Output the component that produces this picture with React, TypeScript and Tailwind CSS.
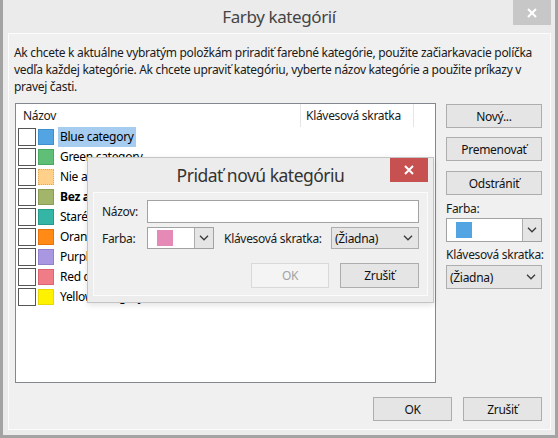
import React from 'react';

// Outlook-style "Farby kategórií" dialog with the "Pridať novú kategóriu" child dialog on top

interface Category {
  name: string;
  color: string;
  border: string;
  bold?: boolean;
  dotted?: boolean;
  selected?: boolean;
}

const CATEGORIES: Category[] = [
  { name: 'Blue category', color: '#52a5e2', border: '#3f8fcf', selected: true },
  { name: 'Green category', color: '#5fbf76', border: '#4aa862' },
  { name: 'Nie aktuálne', color: '#ffd08a', border: '#e0ab5a', dotted: true },
  { name: 'Bez akcie', color: '#a3b46b', border: '#8b9c55', bold: true },
  { name: 'Staré', color: '#34b5a6', border: '#239c8e' },
  { name: 'Orange category', color: '#ff8a16', border: '#e6740a' },
  { name: 'Purple category', color: '#a997e1', border: '#9280cc' },
  { name: 'Red category', color: '#ef7c87', border: '#d9656f' },
  { name: 'Yellow category', color: '#fff200', border: '#e6d800' },
];

function Chevron() {
  return (
    <svg width="10" height="6" viewBox="0 0 10 6">
      <path d="M1 0.8l4 4 4-4" fill="none" stroke="#3a3a3a" strokeWidth="1.3" />
    </svg>
  );
}

function CloseX() {
  return (
    <svg width="10" height="10" viewBox="0 0 10 10">
      <path d="M1 1l8 8M9 1l-8 8" stroke="#fff" strokeWidth="2" />
    </svg>
  );
}

function Btn({
  children,
  className = '',
  disabled = false,
}: {
  children: React.ReactNode;
  className?: string;
  disabled?: boolean;
}) {
  return (
    <div
      className={
        'flex items-center justify-center border ' +
        (disabled
          ? 'bg-[#f4f4f4] border-[#d9d9d9] text-[#a3a3a3] '
          : 'bg-[#e5e5e5] border-[#adadad] text-[#111] ') +
        className
      }
    >
      {children}
    </div>
  );
}

function ColorCombo({ color, className = '' }: { color: string; className?: string }) {
  return (
    <div className={'flex bg-white border border-[#a2a2a2] ' + className}>
      <div className="flex-1 flex items-center pl-[9px]">
        <div className="w-[16px] h-[16px]" style={{ backgroundColor: color }} />
      </div>
      <div className="w-[19px] flex items-center justify-center bg-[#e5e5e5] border-l border-[#adadad]">
        <Chevron />
      </div>
    </div>
  );
}

function NoneSelect({ className = '' }: { className?: string }) {
  return (
    <div
      className={
        'flex items-center justify-between bg-[#e5e5e5] border border-[#adadad] pl-[3px] pr-[5px] text-[#111] ' +
        className
      }
    >
      <span>(Žiadna)</span>
      <Chevron />
    </div>
  );
}

function CategoryRow({ cat }: { cat: Category }) {
  return (
    <div className="h-[20px] flex items-center pl-[2px] whitespace-nowrap">
      <div className="w-[18px] h-[18px] border border-[#555] bg-white" />
      <div
        className={
          'w-[16px] h-[16px] ml-[2px] border ' + (cat.dotted ? 'border-dotted' : 'border-solid')
        }
        style={{ backgroundColor: cat.color, borderColor: cat.border }}
      />
      <span
        className={
          'ml-[4px] h-[20px] leading-[20px] px-[2px] ' +
          (cat.selected ? 'bg-[#a6ccf0] ' : '') +
          (cat.bold ? 'font-bold' : '')
        }
      >
        {cat.name}
      </span>
    </div>
  );
}

function AddCategoryDialog() {
  return (
    <div className="absolute left-[84px] top-[157px] w-[347px] h-[146px] bg-[#ececec] border border-[#c4c4c4] shadow-[0_2px_6px_rgba(0,0,0,0.12)] flex flex-col">
      <div className="h-[34px] relative flex justify-center">
        <span className="text-[17.5px] leading-[34px] text-[#333] tracking-[-0.5px]">
          Pridať novú kategóriu
        </span>
        <div className="absolute right-[5px] top-0 w-[38px] h-[24px] bg-[#c75050] flex items-center justify-center">
          <CloseX />
        </div>
      </div>
      <div className="flex-1 mx-[5px] mb-[6px] bg-[#f0f0f0] border border-[#fbfbfb] pt-[7px] pb-[7px] pl-[8px] pr-[8px] flex flex-col">
        <div className="h-[23px] flex items-center">
          <span className="w-[45px]">Názov:</span>
          <div className="flex-1 h-[23px] bg-white border border-[#a2a2a2]" />
        </div>
        <div className="h-[22px] mt-[4px] flex items-center">
          <span className="w-[45px]">Farba:</span>
          <ColorCombo color="#e58ab7" className="w-[67px] h-[22px]" />
          <span className="ml-[10px] flex-1 whitespace-nowrap">Klávesová skratka:</span>
          <NoneSelect className="w-[88px] h-[22px]" />
        </div>
        <div className="mt-[14px] flex justify-end gap-[11px]">
          <Btn disabled className="w-[78px] h-[25px]">
            OK
          </Btn>
          <Btn className="w-[79px] h-[25px]">Zrušiť</Btn>
        </div>
      </div>
    </div>
  );
}

export default function App() {
  return (
    <div className="relative w-[558px] h-[438px] bg-[#ebebeb] border-x-[3px] border-b-[3px] border-[#a3a3a3] flex flex-col font-['Noto_Sans',sans-serif] text-[12px] leading-[17px] tracking-[-0.3px] text-[#1a1a1a] overflow-hidden">
      {/* Title bar */}
      <div className="h-[33px] grid grid-cols-[1fr_auto_1fr]">
        <div />
        <span className="text-[17px] leading-[33px] tracking-[-0.4px] text-[#444]">Farby kategórií</span>
        <div className="flex justify-end">
          <div className="mr-[4px] w-[38px] h-[25px] bg-[#c7c7c7] flex items-center justify-center">
            <CloseX />
          </div>
        </div>
      </div>

      {/* Main panel */}
      <div className="flex-1 ml-[5px] mr-[4px] mb-[5px] bg-[#f0f0f0] border border-[#fcfcfc] flex flex-col">
        <div className="pt-[10px] pl-[5px] whitespace-nowrap">
          <div>Ak chcete k aktuálne vybratým položkám priradiť farebné kategórie, použite začiarkavacie políčka</div>
          <div>vedľa každej kategórie. Ak chcete upraviť kategóriu, vyberte názov kategórie a použite príkazy v</div>
          <div>pravej časti.</div>
        </div>

        <div className="mt-[8px] flex pl-[6px] pr-[8px]">
          {/* Category list */}
          <div className="w-[422px] h-[280px] bg-white border border-[#828790] flex flex-col text-black">
            <div className="h-[23px] flex">
              <div className="w-[285px] pl-[7px] leading-[23px] text-[#1a1a1a] border-r border-[#e5e5e5]">
                Názov
              </div>
              <div className="w-[113px] pl-[5px] leading-[23px] text-[#1a1a1a] border-r border-[#e5e5e5] whitespace-nowrap">
                Klávesová skratka
              </div>
            </div>
            {CATEGORIES.map((cat) => (
              <CategoryRow key={cat.name} cat={cat} />
            ))}
          </div>

          {/* Right column */}
          <div className="ml-[10px] w-[96px] flex flex-col pt-[1px] whitespace-nowrap">
            <Btn className="h-[24px]">Nový...</Btn>
            <Btn className="h-[24px] mt-[9px]">Premenovať</Btn>
            <Btn className="h-[24px] mt-[10px]">Odstrániť</Btn>
            <span className="mt-[5px]">Farba:</span>
            <ColorCombo color="#52a5e2" className="mt-[1px] h-[24px]" />
            <span className="mt-[4px]">Klávesová skratka:</span>
            <NoneSelect className="mt-[2px] h-[24px]" />
          </div>
        </div>

        <div className="mt-[14px] flex justify-end gap-[11px] pr-[8px]">
          <Btn className="w-[79px] h-[24px]">OK</Btn>
          <Btn className="w-[79px] h-[24px]">Zrušiť</Btn>
        </div>
      </div>

      <AddCategoryDialog />
    </div>
  );
}
